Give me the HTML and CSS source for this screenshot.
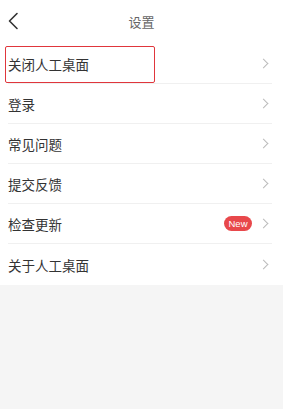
FILE: index.html
```html
<!DOCTYPE html>
<html lang="zh">
<head>
<meta charset="utf-8">
<link rel="stylesheet" href="styles.css">
</head>
<body>
<div class="page">
  <header class="header">
    <svg class="back" width="12" height="18" viewBox="0 0 12 18"><path d="M10 1.5 L2.5 9 L10 16.5" fill="none" stroke="#333" stroke-width="1.6" stroke-linecap="round" stroke-linejoin="round"/></svg>
    <div class="title">设置</div>
  </header>
  <ul class="list">
    <li class="row highlighted"><span class="label">关闭人工桌面</span><span class="chev"></span></li>
    <li class="row"><span class="label">登录</span><span class="chev"></span></li>
    <li class="row"><span class="label">常见问题</span><span class="chev"></span></li>
    <li class="row"><span class="label">提交反馈</span><span class="chev"></span></li>
    <li class="row"><span class="label">检查更新</span><span class="badge">New</span><span class="chev"></span></li>
    <li class="row last"><span class="label">关于人工桌面</span><span class="chev"></span></li>
  </ul>
</div>
</body>
</html>
```
FILE: styles.css
```css
html, body {
  margin: 0;
  padding: 0;
  background: #f5f5f5;
  font-family: "Noto Sans CJK SC", "Noto Sans", sans-serif;
}
.page {
  width: 283px;
  height: 409px;
  background: #f5f5f5;
}
.header {
  position: relative;
  height: 44px;
  background: #fff;
  display: flex;
  align-items: center;
  justify-content: center;
}
.back {
  position: absolute;
  left: 7px;
  top: 12px;
}
.title {
  font-size: 13px;
  color: #666;
  margin-top: -2px;
}
.list {
  list-style: none;
  margin: 0;
  padding: 0 11px 0 8px;
  background: #fff;
}
.row {
  position: relative;
  height: 40px;
  display: flex;
  align-items: center;
  border-bottom: 1px solid #f0f0f0;
  box-sizing: border-box;
}
.row.last {
  border-bottom: none;
  height: 41px;
}
.label {
  flex: 1;
  font-size: 13.5px;
  color: #333;
  padding-top: 1px;
}
.highlighted::after {
  content: "";
  position: absolute;
  left: -3px;
  top: 2px;
  width: 150px;
  height: 37px;
  border: 1.5px solid #e0363c;
  border-radius: 2px;
  box-sizing: border-box;
}
.chev {
  width: 6px;
  height: 6px;
  border-top: 1.2px solid #bbb;
  border-right: 1.2px solid #bbb;
  transform: rotate(45deg);
  margin-right: 5px;
}
.badge {
  width: 28px;
  height: 15px;
  border-radius: 8px;
  background: #e8484b;
  color: #fff;
  font-family: "Liberation Sans", sans-serif;
  font-size: 9.5px;
  line-height: 15px;
  text-align: center;
  margin-right: 8px;
}
```
